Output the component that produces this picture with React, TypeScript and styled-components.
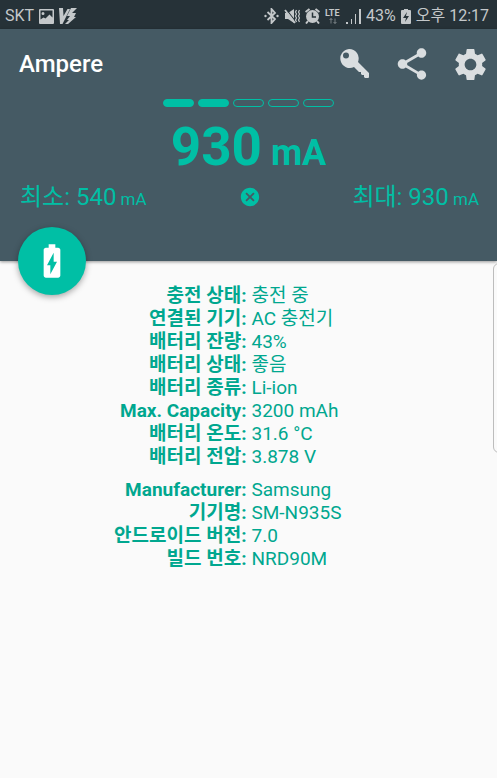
import React from "react";
import styled, { createGlobalStyle, css } from "styled-components";
import {
  MdBatteryChargingFull,
  MdCancel,
  MdSettings,
  MdShare,
} from "react-icons/md";

const color = {
  status: "#263238",
  header: "#455a64",
  accent: "#00bfa5",
  text: "#00a78f",
  page: "#fafafa",
  statusInk: "#c4c8ca",
  action: "#dadee0",
};

const GlobalStyle = createGlobalStyle`
  body {
    margin: 0;
    background: ${color.page};
    font-family: Roboto, "Noto Sans CJK KR", sans-serif;
  }
  * { box-sizing: border-box; }
`;

const Screen = styled.div`
  position: relative;
  min-height: 100vh;
  overflow: hidden;
`;

const StatusBar = styled.div`
  display: flex;
  align-items: center;
  justify-content: space-between;
  height: 29px;
  padding: 3px 8px 0 5px;
  background: ${color.status};
  color: ${color.statusInk};
  font-size: 16px;
  line-height: 24px;
`;

const StatusGroup = styled.div<{ $gap: number }>`
  display: flex;
  align-items: center;
  gap: ${(p) => p.$gap}px;
  white-space: nowrap;
`;

const Glyph = styled.svg`
  display: block;
  flex: none;
  fill: currentColor;
`;

const Header = styled.header`
  position: relative;
  height: 232px;
  background: ${color.header};
  color: ${color.accent};
  box-shadow: 0 1px 3px rgba(0, 0, 0, 0.4);
`;

const AppBar = styled.div`
  display: flex;
  align-items: center;
  justify-content: space-between;
  height: 70px;
  padding: 0 8px 0 19px;
`;

const Title = styled.h1`
  margin: 0;
  color: #fff;
  font-size: 24px;
  font-weight: 500;
  line-height: 32px;
`;

const Actions = styled.div`
  display: flex;
  gap: 20px;
`;

const IconButton = styled.button`
  display: grid;
  place-items: center;
  width: 38px;
  height: 40px;
  padding: 0;
  border: 0;
  background: none;
  color: ${color.action};
`;

const Meter = styled.div`
  display: flex;
  justify-content: center;
  gap: 4px;
`;

const Segment = styled.span<{ $on: boolean }>`
  width: 31px;
  height: 8px;
  border: 1px solid ${color.accent};
  border-radius: 4px;
  ${(p) =>
    p.$on &&
    css`
      background: ${color.accent};
    `}
`;

const Current = styled.div`
  margin-top: 8px;
  text-align: center;
  font-size: 53px;
  font-weight: 700;
  line-height: 64px;
`;

const CurrentUnit = styled.span`
  font-size: 36px;
  line-height: 1;
`;

const Range = styled.div`
  display: grid;
  grid-template-columns: 1fr 22px 1fr;
  align-items: center;
  padding: 0 18px 0 20px;
  font-size: 24px;
  line-height: 36px;
`;

const Extreme = styled.div<{ $end?: boolean }>`
  text-align: ${(p) => (p.$end ? "right" : "left")};
  white-space: nowrap;
`;

const Unit = styled.span`
  font-size: 17px;
  line-height: 1;
`;

const ResetButton = styled.button`
  display: grid;
  place-items: center;
  width: 22px;
  height: 22px;
  padding: 0;
  border: 0;
  background: none;
  color: ${color.accent};
`;

const Fab = styled.button`
  position: absolute;
  left: 18px;
  bottom: -34px;
  display: grid;
  place-items: center;
  width: 68px;
  height: 68px;
  padding: 0;
  border: 0;
  border-radius: 50%;
  background: ${color.accent};
  color: #fff;
  box-shadow: 0 2px 6px rgba(0, 0, 0, 0.35);
`;

const Details = styled.main`
  padding-top: 23px;
  color: ${color.text};
`;

const Table = styled.table`
  width: 100%;
  border-collapse: collapse;
  table-layout: fixed;
  margin-bottom: 10px;
  font-size: 19px;
  line-height: 23px;
`;

const Label = styled.th`
  width: 50%;
  height: 23px;
  padding: 0 2px 0 0;
  text-align: right;
  font-weight: 700;
`;

const Value = styled.td`
  height: 23px;
  padding: 0 0 0 3px;
`;

const EdgeHandle = styled.div`
  position: absolute;
  top: 263px;
  right: -8px;
  width: 12px;
  height: 190px;
  border: 1px solid #bdbdbd;
  border-radius: 6px;
`;

const battery = [
  ["충전 상태", "충전 중"],
  ["연결된 기기", "AC 충전기"],
  ["배터리 잔량", "43%"],
  ["배터리 상태", "좋음"],
  ["배터리 종류", "Li-ion"],
  ["Max. Capacity", "3200 mAh"],
  ["배터리 온도", "31.6 °C"],
  ["배터리 전압", "3.878 V"],
];

const device = [
  ["Manufacturer", "Samsung"],
  ["기기명", "SM-N935S"],
  ["안드로이드 버전", "7.0"],
  ["빌드 번호", "NRD90M"],
];

function InfoTable({ rows }: { rows: string[][] }) {
  return (
    <Table>
      <tbody>
        {rows.map(([label, value]) => (
          <tr key={label}>
            <Label scope="row">{label}:</Label>
            <Value>{value}</Value>
          </tr>
        ))}
      </tbody>
    </Table>
  );
}

export default function App() {
  return (
    <Screen>
      <GlobalStyle />
      <StatusBar>
        <StatusGroup $gap={5}>
          <span>SKT</span>
          <Glyph width="15" height="15" viewBox="0 0 15 15">
            <path fillRule="evenodd" d="M1 0h13a1 1 0 0 1 1 1v13a1 1 0 0 1-1 1H1a1 1 0 0 1-1-1V1a1 1 0 0 1 1-1zM1.500 1.500v9l3-2 2 1 4-4 3 3v-7zM4 3a1 1 0 1 1 0 3 1 1 0 0 1 0-3z" />
          </Glyph>
          <Glyph width="18" height="17" viewBox="0 0 18 17">
            <path d="M0 0h4l.5 8L8.500 1H11L3.500 16H1zM12 0h6l-5 5h4l-2 4h2l-8 7H6l4-4H8l3-4H8z" />
          </Glyph>
        </StatusGroup>
        <StatusGroup $gap={5}>
          <Glyph width="15" height="16" viewBox="0 0 15 16">
            <path d="M3.500 4l7.500 7-3.500 4V1L11 5l-7.500 7" fill="none" stroke="currentColor" strokeWidth="1.8" />
            <circle cx="1.500" cy="8" r="1.200" /><circle cx="13.500" cy="8" r="1.200" />
          </Glyph>
          <Glyph width="16" height="16" viewBox="0 0 16 16">
            <path d="M1 5h3l6-4v14l-6-4H1z" />
            <path d="M2 1l10 13" stroke={color.status} strokeWidth="1.2" />
            <path d="M1 2l10 13" stroke="currentColor" strokeWidth="1.800" />
            <path d="M12.500 2l-1 2 1 2-1 2 1 2-1 2 1 2M15.500 2l-1 2 1 2-1 2 1 2-1 2 1 2" fill="none" stroke="currentColor" strokeWidth="1.200" />
          </Glyph>
          <Glyph width="15" height="16" viewBox="0 0 15 16">
            <circle cx="7.500" cy="8.500" r="6.500" />
            <path d="M.5 4l4-3M14.500 4l-4-3M3 13l-2 2.500M12 13l2 2.500" stroke="currentColor" strokeWidth="2" />
            <path d="M7.500 4.500V9H11" fill="none" stroke={color.status} strokeWidth="1.500" />
          </Glyph>
          <Glyph width="16" height="16" viewBox="0 0 16 16">
            <text x="0" y="8" fontSize="9" fontWeight="700">LTE</text>
            <path d="M6 15.500v-5M4.500 12L6 10.500 7.500 12M10 10.500v5M8.500 14l1.500 1.500 1.500-1.500" fill="none" stroke="currentColor" opacity=".5" />
          </Glyph>
          <Glyph width="15" height="16" viewBox="0 0 15 16">
            <path d="M0 14h2v2H0zM5 11h1v5H5zM9 6h1v10H9zM13 1h2v15h-2z" />
          </Glyph>
          <span>43%</span>
          <Glyph width="10" height="15" viewBox="0 0 10 15">
            <path fillRule="evenodd" d="M3 0h4v1h2q1 0 1 1v12q0 1-1 1H1q-1 0-1-1V2q0-1 1-1h2zM6 3L2 9h3l-1 4 4-6H5z" />
          </Glyph>
          <span>오후 12:17</span>
        </StatusGroup>
      </StatusBar>
      <Header>
        <AppBar>
          <Title>Ampere</Title>
          <Actions>
            <IconButton aria-label="Key">
              <Glyph width="30" height="30" viewBox="0 0 30 30">
                <path fillRule="evenodd" d="M10 0a9.500 9.500 0 0 1 9 13L30 24v4q0 1-1 1h-3l-1-1v-2h-2l-1-1v-2h-2l-5-5A9.500 9.500 0 1 1 10 0zM7 3.500a3 3 0 1 0 0 6 3 3 0 0 0 0-6z" />
              </Glyph>
            </IconButton>
            <IconButton aria-label="Share"><MdShare size={38} /></IconButton>
            <IconButton aria-label="Settings"><MdSettings size={39} /></IconButton>
          </Actions>
        </AppBar>
        <Meter role="img" aria-label="2 / 5">
          {[0, 1, 2, 3, 4].map((i) => (
            <Segment key={i} $on={i < 2} />
          ))}
        </Meter>
        <Current>
          930<CurrentUnit> mA</CurrentUnit>
        </Current>
        <Range>
          <Extreme>최소: 540<Unit> mA</Unit></Extreme>
          <ResetButton aria-label="Reset"><MdCancel size={22} /></ResetButton>
          <Extreme $end>최대: 930<Unit> mA</Unit></Extreme>
        </Range>
        <Fab aria-label="Battery"><MdBatteryChargingFull size={40} /></Fab>
      </Header>
      <Details>
        <InfoTable rows={battery} />
        <InfoTable rows={device} />
      </Details>
      <EdgeHandle />
    </Screen>
  );
}
